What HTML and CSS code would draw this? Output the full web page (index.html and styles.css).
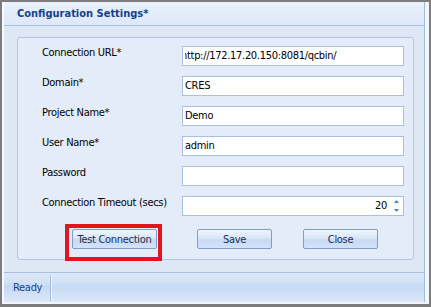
FILE: index.html
```html
<!DOCTYPE html>
<html>
<head>
<meta charset="utf-8">
<link rel="stylesheet" href="styles.css">
</head>
<body>
<div class="window">
  <div class="inner">
    <div class="titlebar"><span class="title">Configuration Settings*</span></div>
    <div class="main">
      <div class="group">
        <div class="form">
          <div class="label">Connection URL*</div>
          <div class="field"><div class="clip"><span class="shift">http://172.17.20.150:8081/qcbin/</span></div></div>
          <div class="label">Domain*</div>
          <div class="field">CRES</div>
          <div class="label">Project Name*</div>
          <div class="field">Demo</div>
          <div class="label">User Name*</div>
          <div class="field">admin</div>
          <div class="label">Password</div>
          <div class="field"></div>
          <div class="label">Connection Timeout (secs)</div>
          <div class="field spin">
            <span class="num">20</span>
            <svg class="arrows" width="7" height="14" viewBox="0 0 7 14">
              <path d="M3.5 1 L6 4 L1 4 Z" fill="#5d7fae"/>
              <path d="M3.5 13 L6 10 L1 10 Z" fill="#5d7fae"/>
            </svg>
          </div>
        </div>
        <div class="buttons">
          <div class="btn-wrap">
            <button class="btn btn-test">Test Connection</button>
            <span class="highlight"></span>
          </div>
          <button class="btn btn-save">Save</button>
          <button class="btn btn-close">Close</button>
        </div>
      </div>
    </div>
    <div class="statusbar"><span class="status">Ready</span><span class="sep"></span></div>
  </div>
</div>
</body>
</html>
```
FILE: styles.css
```css
* { box-sizing: border-box; }
html, body { margin: 0; padding: 0; }
body {
  width: 431px;
  height: 307px;
  overflow: hidden;
  font-family: "DejaVu Sans Condensed", "DejaVu Sans", sans-serif;
  font-size: 11px;
  letter-spacing: -0.3px;
}
.window {
  width: 431px;
  height: 307px;
  border: 2px solid #7c7c7c;
  border-bottom-width: 3px;
  background: #f3f6fb;
  padding: 0 4px 2px 1px;
}
.inner {
  height: 100%;
  display: flex;
  flex-direction: column;
  border-right: 1px solid #a3b9d6;
  border-left: 1px solid #fdfeff;
}
.titlebar {
  height: 24px;
  flex: none;
  border-bottom: 1px solid #a9c1e1;
  background: linear-gradient(#e9f1fc, #dde8f7);
  padding-left: 13px;
  display: flex;
  align-items: center;
}
.title {
  font-weight: bold;
  font-size: 11px;
  color: #15428b;
  letter-spacing: 0;
}
.main {
  flex: 1;
  background: #dee8f5;
  padding: 11px 10px 0 13px;
}
.group {
  border: 1px solid #b3c7e2;
  border-radius: 3px;
  background: #e3ecf8;
  padding: 8px 9px 10px 24px;
}
.form {
  display: grid;
  grid-template-columns: 140px 222px;
  grid-auto-rows: 20px;
  row-gap: 10px;
}
.label {
  line-height: 13px;
  color: #000;
  white-space: nowrap;
}
.field {
  background: #fff;
  border: 1px solid #abc0dd;
  height: 20px;
  line-height: 18px;
  padding-left: 2px;
  color: #000;
  white-space: nowrap;
  overflow: hidden;
}
.clip {
  overflow: hidden;
  white-space: nowrap;
}
.shift {
  margin-left: -4px;
}
.spin {
  display: flex;
  justify-content: flex-end;
  align-items: center;
  padding-right: 3px;
}
.num { margin-right: 6px; }
.arrows { display: block; }
.buttons {
  display: flex;
  margin-top: 13px;
  padding-left: 30px;
}
.btn-wrap { position: relative; }
.btn {
  height: 20px;
  border: 1px solid #7f9ecb;
  border-radius: 2px;
  background: linear-gradient(#eef4fc 0%, #dbe7f7 45%, #c6daf3 55%, #d3e3f8 100%);
  font-family: "DejaVu Sans Condensed", "DejaVu Sans", sans-serif;
  font-size: 11px;
  letter-spacing: -0.3px;
  color: #1b2f52;
  padding: 0;
  display: block;
}
.btn-test { width: 85px; }
.btn-save { width: 75px; margin-left: 40px; }
.btn-close { width: 75px; margin-left: 31px; }
.highlight {
  position: absolute;
  left: -7px;
  top: -5px;
  width: 97px;
  height: 37px;
  border: 4px solid #e2141e;
  pointer-events: none;
}
.statusbar {
  height: 30px;
  flex: none;
  border-top: 1px solid #a7bfdf;
  background: linear-gradient(#dce8f7 0%, #d3e2f5 30%, #c5d9f2 45%, #cfe0f6 70%, #dce9f9 100%);
  display: flex;
  align-items: center;
}
.status {
  color: #15428b;
  padding-left: 9px;
  width: 46px;
}
.sep {
  width: 1px;
  height: 26px;
  background: #a3bbdb;
  box-shadow: 1px 0 0 #eef4fc;
}
```
